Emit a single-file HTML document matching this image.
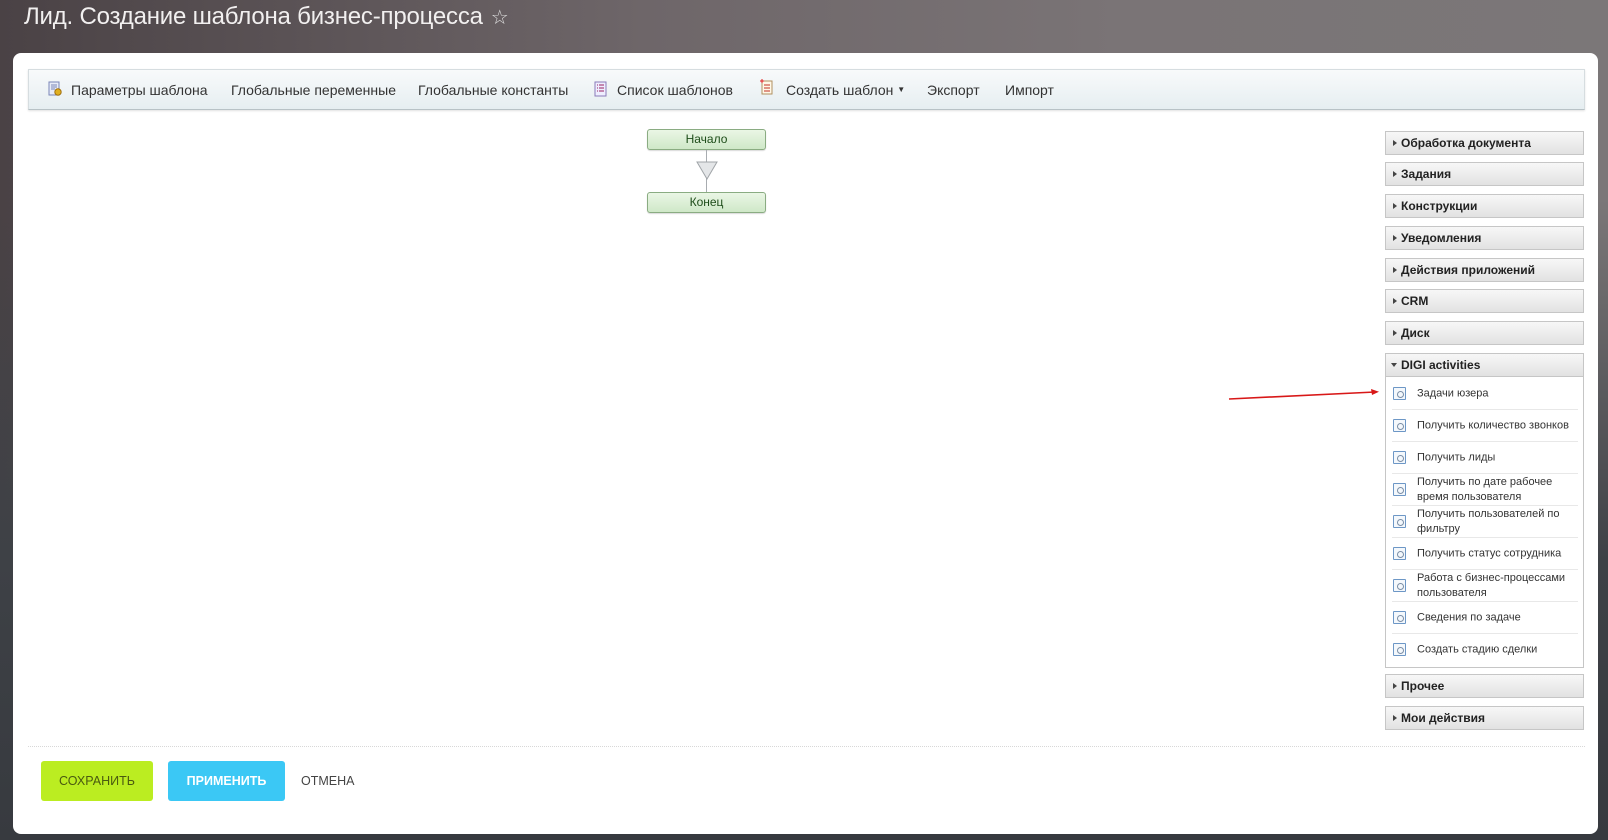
<!DOCTYPE html>
<html><head><meta charset="utf-8"><style>
*{margin:0;padding:0;box-sizing:border-box}
html,body{width:1608px;height:840px;overflow:hidden}
body{font-family:"Liberation Sans","DejaVu Sans",sans-serif;position:relative;
background:linear-gradient(180deg,rgba(0,0,0,0) 0px,rgba(0,0,0,0) 200px,#3e4146 560px,#373a3f 840px),linear-gradient(90deg,#4a4245 0%,#6e6669 40%,#7a7476 70%,#7b7778 100%);}
h1{position:absolute;left:24px;top:3px;font-size:24px;font-weight:normal;color:#f2f0f0;letter-spacing:-0.2px}
h1 span{font-size:20px;color:#ddd;margin-left:8px}
.card{position:absolute;left:13px;top:53px;width:1585px;height:781px;background:#fff;border-radius:8px}
.tb{position:absolute;left:15px;top:16px;width:1557px;height:41px;background:linear-gradient(#f8fafb,#e6eef1);border:1px solid #d6dde0;border-bottom:1px solid #b8c2c6;box-shadow:0 1px 2px rgba(0,0,0,.12)}
.tb div{position:absolute;top:12px;font-size:14px;color:#333;white-space:nowrap}
.ic{position:absolute;top:11px;width:14px;height:16px}
.node{position:absolute;left:634px;width:119px;height:21px;border:1px solid #8aac82;border-radius:3px;background:linear-gradient(#eaf6e5,#cfe8c8);font-size:12px;color:#1e4d1a;text-align:center;line-height:19px;box-shadow:0 1px 1px rgba(0,0,0,.15)}
.vl{position:absolute;left:693px;width:1px;background:#a8acb0}
.pan{position:absolute;left:1372px;width:199px}
.ph{position:absolute;left:0;width:199px;height:24px;border:1px solid #c6c6c6;background:linear-gradient(#f7f7f7,#e2e2e2);font-size:12px;font-weight:bold;color:#222;line-height:23px;padding-left:15px}
.ph:before{content:"";position:absolute;left:7px;top:8px;border-left:4px solid #444;border-top:3px solid transparent;border-bottom:3px solid transparent}
.ph.open:before{left:5px;top:9px;border-top:4px solid #444;border-left:3px solid transparent;border-right:3px solid transparent;border-bottom:0}
.list{position:absolute;left:0;width:199px;border:1px solid #c6c6c6;border-top:0;background:#fff}
.it{position:absolute;left:6px;width:186px;height:32px;border-bottom:1px solid #e8e8e8;font-size:11px;color:#333;line-height:15px}
.it i{position:absolute;left:1px;top:9px;width:13px;height:13px;border:1px solid #6d97c6;border-radius:1px;background:#f4f8fc}
.it i:after{content:"";position:absolute;left:3px;top:3px;width:5px;height:5px;border:1px solid #7a8ea6;border-radius:50%}
.it span{position:absolute;left:25px;top:50%;transform:translateY(-50%)}
.btn{position:absolute;top:708px;height:40px;border-radius:3px;font-size:12.5px;line-height:40px;text-align:center}
</style></head><body>
<h1>Лид. Создание шаблона бизнес-процесса<span>☆</span></h1>
<div class="card">
 <div class="tb">
  <svg class="ic" style="left:19px" viewBox="0 0 14 16"><rect x="1" y="1" width="10" height="13" fill="#e8ecf8" stroke="#7a86b8"/><path d="M3 4h6M3 6h6M3 8h4" stroke="#7a86b8"/><circle cx="10" cy="11" r="3.2" fill="#e0b020" stroke="#a07010"/></svg>
  <div style="left:42px">Параметры шаблона</div>
  <div style="left:202px">Глобальные переменные</div>
  <div style="left:389px">Глобальные константы</div>
  <svg class="ic" style="left:565px" viewBox="0 0 14 16"><rect x="1" y="1" width="11" height="14" fill="#eef" stroke="#8a7ab8"/><path d="M5 4h5M5 7h5M5 10h5M3 4h1M3 7h1M3 10h1" stroke="#9a2060"/></svg>
  <div style="left:588px">Список шаблонов</div>
  <svg class="ic" style="left:731px;top:9px" viewBox="0 0 14 16"><rect x="2" y="2" width="10" height="13" fill="#fff8e8" stroke="#b09060"/><path d="M4 6h6M4 9h6M4 12h6" stroke="#c03020"/><path d="M2 0v4M0 2h4" stroke="#e02020"/></svg>
  <div style="left:757px">Создать шаблон <span style="font-size:8px;vertical-align:3px">▼</span></div>
  <div style="left:898px">Экспорт</div>
  <div style="left:976px">Импорт</div>
 </div>
 <div class="node" style="top:76px">Начало</div>
 <div class="vl" style="top:97px;height:42px"></div>
 <svg style="position:absolute;left:683px;top:108px" width="22" height="20"><path d="M1 1L21 1L11 18Z" fill="#e4e6e8" stroke="#a0a4a8"/></svg>
 <div class="node" style="top:139px">Конец</div>
 <svg style="position:absolute;left:1214px;top:334px" width="160" height="14"><path d="M2 12L148 5" stroke="#d81818" stroke-width="1.6"/><path d="M152 4.8L144 2L145 8Z" fill="#d81818"/></svg>
 <div class="pan">
  <div class="ph" style="top:78px">Обработка документа</div>
  <div class="ph" style="top:109px">Задания</div>
  <div class="ph" style="top:141px">Конструкции</div>
  <div class="ph" style="top:173px">Уведомления</div>
  <div class="ph" style="top:205px">Действия приложений</div>
  <div class="ph" style="top:236px">CRM</div>
  <div class="ph" style="top:268px">Диск</div>
  <div class="ph open" style="top:300px;height:24px">DIGI activities</div>
  <div class="list" style="top:324px;height:291px">
   <div class="it" style="top:1px"><i></i><span>Задачи юзера</span></div>
   <div class="it" style="top:33px"><i></i><span>Получить количество звонков</span></div>
   <div class="it" style="top:65px"><i></i><span>Получить лиды</span></div>
   <div class="it" style="top:97px"><i></i><span>Получить по дате рабочее время пользователя</span></div>
   <div class="it" style="top:129px"><i></i><span>Получить пользователей по фильтру</span></div>
   <div class="it" style="top:161px"><i></i><span>Получить статус сотрудника</span></div>
   <div class="it" style="top:193px"><i></i><span>Работа с бизнес-процессами пользователя</span></div>
   <div class="it" style="top:225px"><i></i><span>Сведения по задаче</span></div>
   <div class="it" style="top:257px;border-bottom:0"><i></i><span>Создать стадию сделки</span></div>
  </div>
  <div class="ph" style="top:621px">Прочее</div>
  <div class="ph" style="top:653px">Мои действия</div>
 </div>
 <div style="position:absolute;left:15px;top:693px;width:1557px;border-top:1px dotted #d8d8d8"></div>
 <div class="btn" style="left:28px;width:112px;background:#bbed21;color:#4a5a10">СОХРАНИТЬ</div>
 <div class="btn" style="left:155px;width:117px;background:#3bc8f5;color:#fff;font-weight:bold">ПРИМЕНИТЬ</div>
 <div class="btn" style="left:288px;width:50px;color:#444;text-align:left">ОТМЕНА</div>
</div>
</body></html>
